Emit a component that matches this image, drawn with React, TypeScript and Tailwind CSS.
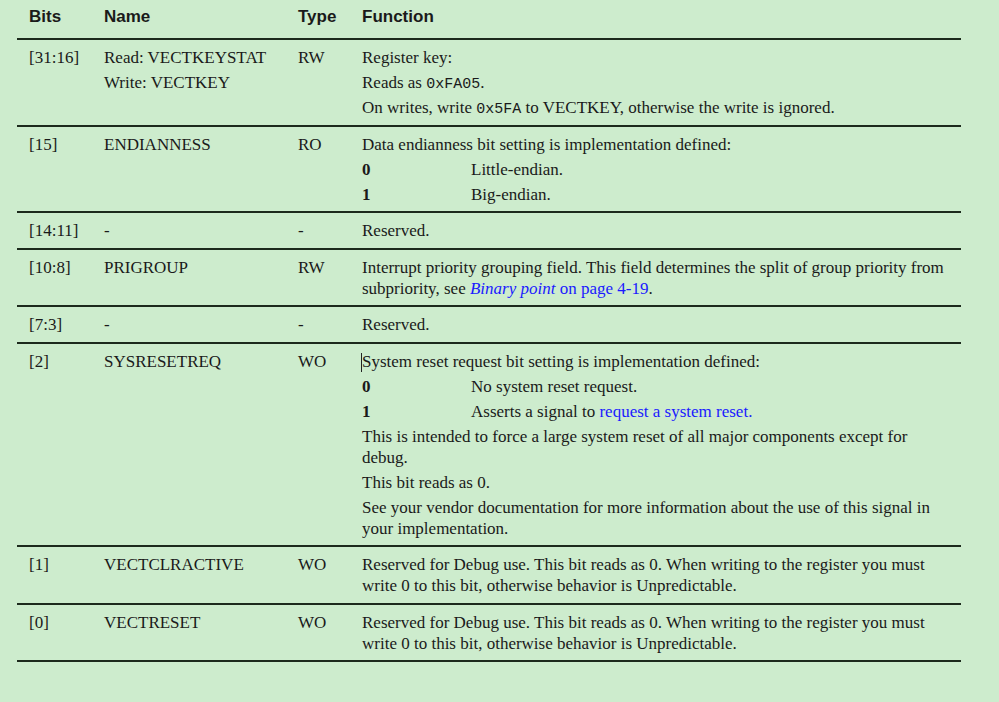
import React from 'react'

const mono = "font-['Liberation_Mono',monospace] text-[15px] leading-none"

type Row = {
  bits: string
  name: React.ReactNode
  type: string
  fn: React.ReactNode
}

function P({ children, first }: { children: React.ReactNode; first?: boolean }) {
  return <p className={first ? '' : 'mt-1'}>{children}</p>
}

function Enum({ value, children }: { value: string; children: React.ReactNode }) {
  return (
    <div className="mt-1 flex">
      <span className="w-[109px] shrink-0 font-bold">{value}</span>
      <span>{children}</span>
    </div>
  )
}

const rows: Row[] = [
  {
    bits: '[31:16]',
    name: (
      <>
        <P first>Read: VECTKEYSTAT</P>
        <P>Write: VECTKEY</P>
      </>
    ),
    type: 'RW',
    fn: (
      <>
        <P first>Register key:</P>
        <P>
          Reads as <code className={mono}>0xFA05</code>.
        </P>
        <P>
          On writes, write <code className={mono}>0x5FA</code> to VECTKEY, otherwise the write is ignored.
        </P>
      </>
    ),
  },
  {
    bits: '[15]',
    name: 'ENDIANNESS',
    type: 'RO',
    fn: (
      <>
        <P first>Data endianness bit setting is implementation defined:</P>
        <Enum value="0">Little-endian.</Enum>
        <Enum value="1">Big-endian.</Enum>
      </>
    ),
  },
  { bits: '[14:11]', name: '-', type: '-', fn: <P first>Reserved.</P> },
  {
    bits: '[10:8]',
    name: 'PRIGROUP',
    type: 'RW',
    fn: (
      <P first>
        Interrupt priority grouping field. This field determines the split of group priority from subpriority, see{' '}
        <span className="text-[#1a1aff]">
          <i>Binary point</i> on page 4-19
        </span>
        .
      </P>
    ),
  },
  { bits: '[7:3]', name: '-', type: '-', fn: <P first>Reserved.</P> },
  {
    bits: '[2]',
    name: 'SYSRESETREQ',
    type: 'WO',
    fn: (
      <>
        <P first>
          <span className="relative">
            <span className="absolute -left-px top-[1px] h-[19px] w-px bg-[#222]" />
            System reset request bit setting is implementation defined:
          </span>
        </P>
        <Enum value="0">No system reset request.</Enum>
        <Enum value="1">
          Asserts a signal to <span className="text-[#1a1aff]">request a system reset.</span>
        </Enum>
        <P>This is intended to force a large system reset of all major components except for debug.</P>
        <P>This bit reads as 0.</P>
        <P>See your vendor documentation for more information about the use of this signal in your implementation.</P>
      </>
    ),
  },
  {
    bits: '[1]',
    name: 'VECTCLRACTIVE',
    type: 'WO',
    fn: (
      <P first>
        Reserved for Debug use. This bit reads as 0. When writing to the register you must write 0 to this bit,
        otherwise behavior is Unpredictable.
      </P>
    ),
  },
  {
    bits: '[0]',
    name: 'VECTRESET',
    type: 'WO',
    fn: (
      <P first>
        Reserved for Debug use. This bit reads as 0. When writing to the register you must write 0 to this bit,
        otherwise behavior is Unpredictable.
      </P>
    ),
  },
]

export default function App() {
  return (
    <div className="min-h-[702px] w-[999px] bg-[#cdeccd] pl-[17px] font-['Liberation_Serif',serif] text-[#1a1a1a]">
      <table className="w-[944px] table-fixed border-collapse">
        <colgroup>
          <col className="w-[75px]" />
          <col className="w-[194px]" />
          <col className="w-[64px]" />
          <col />
        </colgroup>
        <thead>
          <tr className="border-b-2 border-[#1c2a1c] font-['Liberation_Sans',sans-serif] text-[17px] font-bold leading-[21px]">
            <th className="pl-3 pt-[6px] pb-[11px] text-left">Bits</th>
            <th className="pl-3 pt-[6px] pb-[11px] text-left">Name</th>
            <th className="pl-3 pt-[6px] pb-[11px] text-left">Type</th>
            <th className="pl-3 pt-[6px] pb-[11px] text-left">Function</th>
          </tr>
        </thead>
        <tbody className="font-['Liberation_Serif',serif] text-[17px] leading-[21px]">
          {rows.map((r) => (
            <tr key={r.bits} className="border-b-2 border-[#1c2a1c] align-top">
              <td className="pl-3 pt-[7px] pb-[6.5px]">{r.bits}</td>
              <td className="pl-3 pt-[7px] pb-[6.5px]">{r.name}</td>
              <td className="pl-3 pt-[7px] pb-[6.5px]">{r.type}</td>
              <td className="pl-3 pr-2 pt-[7px] pb-[6.5px]">{r.fn}</td>
            </tr>
          ))}
        </tbody>
      </table>
    </div>
  )
}
